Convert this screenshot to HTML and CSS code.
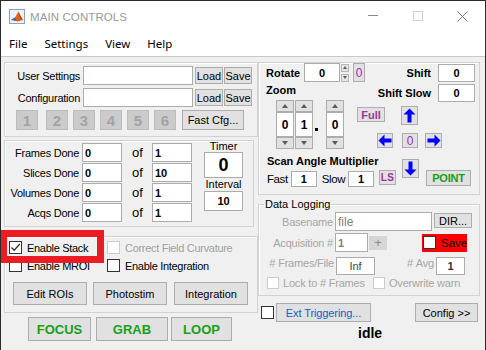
FILE: index.html
```html
<!DOCTYPE html>
<html>
<head>
<meta charset="utf-8">
<title>MAIN CONTROLS</title>
<link rel="stylesheet" href="styles.css">
</head>
<body>
<div class="window">
  <div class="titlebar">
    <svg class="appicon" width="16" height="15" viewBox="0 0 16 15">
      <rect x="0.5" y="0.5" width="15" height="14" fill="#eef2f7" stroke="#8ea3bb"/>
      <path d="M2 11 L6 8.5 L9.5 2.5 L11.5 7 L14 11 L9 12.5 Z" fill="#e2621b"/>
      <path d="M9.5 2.5 L11.5 7 L14 11 L11 9 Z" fill="#b8350f"/>
      <path d="M2 11 L6 8.5 L8 11.5 Z" fill="#2c6db3"/>
    </svg>
    <span class="title">MAIN CONTROLS</span>
    <div class="winbtns">
      <span class="wb"><svg width="10" height="10"><path d="M0 4.5H10" stroke="#8a8a8a"/></svg></span>
      <span class="wb"><svg width="10" height="10"><rect x="0.5" y="0.5" width="9" height="9" fill="none" stroke="#d2d2d2"/></svg></span>
      <span class="wb"><svg width="11" height="11"><path d="M0.5 0.5L10.5 10.5M10.5 0.5L0.5 10.5" stroke="#7a7a7a"/></svg></span>
    </div>
  </div>
  <div class="menubar">
    <span class="menu">File</span>
    <span class="menu">Settings</span>
    <span class="menu">View</span>
    <span class="menu">Help</span>
  </div>

  <div class="content">
    <div class="leftcol">
      <div class="panel settings">
        <div class="srow">
          <span class="slabel">User Settings</span>
          <span class="field wide"></span>
          <span class="btn sm">Load</span>
          <span class="btn sm save">Save</span>
        </div>
        <div class="srow">
          <span class="slabel">Configuration</span>
          <span class="field wide"></span>
          <span class="btn sm">Load</span>
          <span class="btn sm save">Save</span>
        </div>
        <div class="numrow">
          <span class="numbtn first">1</span>
          <span class="numbtn">2</span>
          <span class="numbtn">3</span>
          <span class="numbtn">4</span>
          <span class="numbtn">5</span>
          <span class="numbtn">6</span>
          <span class="btn fastcfg">Fast Cfg...</span>
        </div>
      </div>

      <div class="panel counters">
        <div class="crows">
          <div class="crow"><span class="clabel">Frames Done</span><span class="field cnt">0</span><span class="of">of</span><span class="field cnt">1</span></div>
          <div class="crow"><span class="clabel">Slices Done</span><span class="field cnt">0</span><span class="of">of</span><span class="field cnt">10</span></div>
          <div class="crow"><span class="clabel">Volumes Done</span><span class="field cnt">0</span><span class="of">of</span><span class="field cnt">1</span></div>
          <div class="crow"><span class="clabel">Acqs Done</span><span class="field cnt">0</span><span class="of">of</span><span class="field cnt">1</span></div>
        </div>
        <div class="timer">
          <span class="tlabel">Timer</span>
          <span class="field tbox">0</span>
          <span class="ilabel">Interval</span>
          <span class="field ibox">10</span>
        </div>
      </div>

      <div class="panel checks">
        <div class="chkrow">
          <span class="chkcell"><span class="cb"><svg width="11" height="11" viewBox="0 0 11 11"><path d="M1.5 5.5 L4.2 8.3 L9.8 2" fill="none" stroke="#333" stroke-width="1.3"/></svg></span>Enable Stack</span>
          <span class="chkcell dis"><span class="cb off"></span>Correct Field Curvature</span>
        </div>
        <div class="chkrow second">
          <span class="chkcell"><span class="cb"></span>Enable MROI</span>
          <span class="chkcell"><span class="cb"></span>Enable Integration</span>
        </div>
        <div class="brow">
          <span class="btn big">Edit ROIs</span>
          <span class="btn big b2">Photostim</span>
          <span class="btn big b3">Integration</span>
        </div>
      </div>

      <div class="runrow">
        <span class="btn run focus">FOCUS</span>
        <span class="btn run grab">GRAB</span>
        <span class="btn run loop">LOOP</span>
      </div>
    </div>

    <div class="rightcol">
      <div class="panel motion">
        <div class="mrow1">
          <span class="blabel rot">Rotate</span>
          <span class="field mval rotval">0</span>
          <span class="spin">
            <span class="spinhalf"><span class="tri up tiny"></span></span>
            <span class="spinhalf"><span class="tri down tiny"></span></span>
          </span>
          <span class="btn purple zero">0</span>
          <span class="blabel push">Shift</span>
          <span class="field mval shiftval">0</span>
        </div>
        <div class="mrow2">
          <span class="blabel rot">Zoom</span>
          <span class="blabel push">Shift Slow</span>
          <span class="field mval shiftval">0</span>
        </div>
        <div class="mbody">
          <div class="mleft">
            <div class="zrow">
              <div class="zcol">
                <span class="btn zbtn"><span class="tri up"></span></span>
                <span class="field zfield">0</span>
                <span class="btn zbtn"><span class="tri down"></span></span>
              </div>
              <div class="zcol c2">
                <span class="btn zbtn"><span class="tri up"></span></span>
                <span class="field zfield">1</span>
                <span class="btn zbtn"><span class="tri down"></span></span>
              </div>
              <span class="zdot"></span>
              <div class="zcol c3">
                <span class="btn zbtn"><span class="tri up"></span></span>
                <span class="field zfield">0</span>
                <span class="btn zbtn"><span class="tri down"></span></span>
              </div>
              <div class="fullcol">
                <span class="btn purple full">Full</span>
                <span class="btn arrow left">
                  <svg width="14" height="13" viewBox="0 0 14 13"><path d="M0.5 6.5 L6.5 0.5 L6.5 4.5 L13.5 4.5 L13.5 8.5 L6.5 8.5 L6.5 12.5 Z" fill="#0000ff"/></svg>
                </span>
              </div>
            </div>
            <span class="blabel scan">Scan Angle Multiplier</span>
            <div class="fastrow">
              <span class="nlabel fast">Fast</span>
              <span class="field sval">1</span>
              <span class="nlabel slow">Slow</span>
              <span class="field sval">1</span>
              <span class="btn purple ls">LS</span>
            </div>
          </div>
          <div class="pad">
            <span class="btn arrow upbtn">
              <svg width="13" height="15" viewBox="0 0 13 15"><path d="M6.5 0.5 L12.5 6.5 L8.5 6.5 L8.5 14.5 L4.5 14.5 L4.5 6.5 L0.5 6.5 Z" fill="#0000ff"/></svg>
            </span>
            <div class="padrow mid">
              <span class="btn purple center">0</span>
              <span class="btn arrow right">
                <svg width="14" height="13" viewBox="0 0 14 13"><path d="M13.5 6.5 L7.5 0.5 L7.5 4.5 L0.5 4.5 L0.5 8.5 L7.5 8.5 L7.5 12.5 Z" fill="#0000ff"/></svg>
              </span>
            </div>
            <div class="padrow bot">
              <span class="btn arrow downbtn">
                <svg width="13" height="15" viewBox="0 0 13 15"><path d="M6.5 14.5 L12.5 8.5 L8.5 8.5 L8.5 0.5 L4.5 0.5 L4.5 8.5 L0.5 8.5 Z" fill="#0000ff"/></svg>
              </span>
              <span class="btn point">POINT</span>
            </div>
          </div>
        </div>
      </div>

      <fieldset class="logging">
        <legend>Data Logging</legend>
        <div class="lrow r1">
          <span class="glabel">Basename</span>
          <span class="field gfield base">file</span>
          <span class="btn dir">DIR...</span>
        </div>
        <div class="lrow r2">
          <span class="glabel">Acquisition #</span>
          <span class="field gfield acq">1</span>
          <span class="plus">+</span>
          <span class="savebox"><span class="cb white"></span>Save</span>
        </div>
        <div class="lrow r3">
          <span class="glabel fl">#&nbsp;Frames/File</span>
          <span class="field inf">Inf</span>
          <span class="glabel avg">#&nbsp;Avg</span>
          <span class="field avgval">1</span>
        </div>
        <div class="lrow r4">
          <span class="lcell"><span class="cb off sm"></span>Lock to # Frames</span>
          <span class="lcell"><span class="cb off sm"></span>Overwrite warn</span>
        </div>
      </fieldset>

      <div class="extrow">
        <span class="cb ext"></span>
        <span class="btn extbtn">Ext Triggering...</span>
        <span class="btn config">Config &gt;&gt;</span>
      </div>
      <div class="idle">idle</div>
    </div>
  </div>

  <div class="highlight"></div>
</div>
</body>
</html>
```

FILE: styles.css
```css
* { box-sizing: border-box; }

body {
  margin: 0;
  background: #f0f0f0;
}

.window {
  position: relative;
  width: 486px;
  height: 350px;
  border: 1px solid #2b2b2b;
  border-bottom: none;
  background: #f0f0f0;
  overflow: hidden;
  font-family: "Liberation Sans", Arial, sans-serif;
  font-size: 11px;
  color: #000;
}

/* title bar */
.titlebar {
  height: 30px;
  background: #fff;
  display: flex;
  align-items: center;
}
.appicon { margin-left: 8px; margin-top: 1px; }
.title {
  margin-left: 5px;
  color: #9a9a9a;
  font-family: "Liberation Sans", Arial, sans-serif;
  font-size: 11.5px;
  letter-spacing: 0.1px;
  margin-top: 1px;
}
.winbtns { margin-left: auto; display: flex; height: 30px; }
.wb {
  width: 45px;
  height: 30px;
  display: flex;
  align-items: center;
  justify-content: center;
}

/* menu */
.menubar {
  height: 26px;
  background: #fff;
  border-bottom: 1px solid #c9c9c9;
  display: flex;
  align-items: center;
  padding-left: 8px;
  font-family: "Noto Sans", "Open Sans", sans-serif;
  font-size: 11.5px;
}
.menu { margin-right: 17px; padding-bottom: 1px; }

/* content */
.content {
  display: flex;
  padding: 5px 0 0 3px;
}
.leftcol { width: 254px; display: flex; flex-direction: column; }
.rightcol { width: 222px; display: flex; flex-direction: column; }

.panel {
  border: 1px solid #d2d2d2;
  box-shadow: inset 1px 1px 0 #fff;
}

.field {
  display: flex;
  align-items: center;
  background: #fff;
  border: 1px solid #acacac;
}
.btn {
  display: flex;
  align-items: center;
  justify-content: center;
  background: #e1e1e1;
  border: 1px solid #adadad;
  white-space: nowrap;
}

/* settings */
.settings { height: 75px; padding-top: 3px; }
.srow { display: flex; align-items: center; height: 19px; margin-bottom: 3px; }
.slabel {
  width: 75px;
  text-align: right;
  margin-right: 3px;
  letter-spacing: -0.25px;
}
.field.wide { width: 110px; height: 19px; }
.btn.sm { width: 28px; height: 17px; margin-left: 2px; }
.btn.sm.save { margin-left: 1px; }
.numrow { display: flex; align-items: center; height: 20px; padding-left: 11px; }
.numbtn {
  width: 22px;
  height: 20px;
  margin-left: 5px;
  display: flex;
  align-items: center;
  justify-content: center;
  background: #cbcbcb;
  border: 1px solid #bdbdbd;
  color: #a3a3a3;
  font-weight: bold;
  font-size: 15px;
}
.numbtn.first { margin-left: 0; margin-right: 3px; }
.btn.fastcfg { width: 62px; height: 20px; margin-left: 6px; }

/* counters */
.counters {
  width: 250px;
  height: 87px;
  margin-top: 3px;
  padding-top: 2px;
  display: flex;
}
.crows { display: flex; flex-direction: column; gap: 1px; }
.crow { display: flex; align-items: center; height: 19px; }
.clabel { width: 74px; text-align: right; margin-right: 3px; letter-spacing: -0.25px; }
.field.cnt { width: 40px; height: 19px; font-weight: bold; padding-left: 2px; }
.of { width: 30px; text-align: center; font-size: 13px; padding-left: 1px; }
.timer {
  margin-left: 12px;
  margin-top: -2px;
  width: 39px;
  display: flex;
  flex-direction: column;
  align-items: center;
}
.tlabel { line-height: 11px; height: 11px; }
.field.tbox {
  width: 39px;
  height: 26px;
  justify-content: center;
  font-weight: bold;
  font-size: 18px;
}
.ilabel { line-height: 13px; height: 13px; }
.field.ibox { width: 39px; height: 20px; justify-content: center; font-weight: bold; }

/* checks */
.checks { height: 77px; margin-top: 9px; padding: 4px 0 0 4px; }
.chkrow { display: flex; align-items: center; height: 13px; }
.chkrow.second { margin-top: 5px; }
.chkcell { width: 98px; display: flex; align-items: center; letter-spacing: -0.3px; white-space: nowrap; }
.chkcell.dis { color: #a0a0a0; }
.cb {
  width: 13px;
  height: 13px;
  flex: none;
  border: 1px solid #333;
  background: #fff;
  margin-right: 5px;
  display: flex;
  align-items: center;
  justify-content: center;
}
.cb.off { border-color: #cccccc; }
.brow { display: flex; margin-top: 10px; padding-left: 4px; }
.btn.big { width: 74px; height: 23px; }
.btn.b2 { margin-left: 6px; }
.btn.b3 { margin-left: 7px; }

.runrow { display: flex; margin-top: 4px; padding-left: 24px; }
.btn.run {
  height: 24px;
  color: #17a017;
  font-weight: bold;
  font-size: 13px;
}
.btn.focus { width: 63px; }
.btn.grab { width: 72px; margin-left: 5px; }
.btn.loop { width: 61px; margin-left: 3px; }

/* motion */
.motion { height: 133px; display: flex; flex-direction: column; }
.blabel { font-weight: bold; font-size: 11px; white-space: nowrap; }
.mrow1 { display: flex; align-items: center; height: 19px; padding-right: 4px; }
.mrow2 { display: flex; align-items: flex-start; height: 18px; margin-top: 2px; padding-right: 4px; }
.mrow2 .blabel { line-height: 13px; }
.mrow2 .blabel.push { align-self: center; }
.blabel.rot { margin-left: 7px; width: 38px; }
.blabel.push { margin-left: auto; margin-right: 7px; }
.field.mval { justify-content: center; font-weight: bold; font-size: 11px; }
.field.rotval { width: 36px; height: 19px; }
.field.shiftval { width: 37px; height: 18px; }
.spin {
  margin-left: 1px;
  width: 8px;
  height: 18px;
  display: flex;
  flex-direction: column;
  justify-content: space-between;
}
.spinhalf {
  height: 8px;
  background: #e6e6e6;
  border: 1px solid #b8b8b8;
  display: flex;
  align-items: center;
  justify-content: center;
}
.btn.zero { margin-left: 4px; width: 12px; height: 19px; font-size: 12px; }
.purple { color: #a2309e; }

.tri { width: 0; height: 0; border-left: 3.5px solid transparent; border-right: 3.5px solid transparent; }
.tri.up { border-bottom: 4px solid #5a5a5a; }
.tri.down { border-top: 4px solid #5a5a5a; }
.tri.tiny { border-left-width: 2px; border-right-width: 2px; border-bottom-width: 3px; border-top-width: 3px; }

.mbody { display: flex; margin-top: -2px; }
.mleft { width: 138px; display: flex; flex-direction: column; }
.zrow { display: flex; align-items: flex-start; padding-left: 17px; }
.zcol { width: 18px; display: flex; flex-direction: column; }
.zcol.c2 { margin-left: 1px; }
.zcol.c3 { margin-left: 8px; }
.btn.zbtn { height: 12px; }
.field.zfield { height: 25px; justify-content: center; font-weight: bold; font-size: 12px; }
.zdot { width: 3px; height: 3px; background: #000; margin: 28px 0 0 2px; }
.fullcol { display: flex; flex-direction: column; align-items: flex-start; margin-left: 13px; }
.btn.full { width: 28px; height: 15px; margin-top: 7px; font-weight: bold; font-size: 11px; }
.btn.arrow.left { width: 16px; height: 15px; margin: 11px 0 0 20px; }
.blabel.scan { margin: 6px 0 0 8px; line-height: 13px; }
.fastrow { display: flex; align-items: center; height: 18px; margin-top: 2px; }
.nlabel { font-size: 11.5px; letter-spacing: -0.4px; }
.nlabel.fast { margin-left: 8px; }
.nlabel.slow { margin-left: 5px; }
.field.sval { width: 26px; height: 16px; margin-left: 3px; justify-content: center; font-weight: bold; }
.btn.ls { width: 17px; height: 15px; margin-left: 5px; align-self: flex-start; font-weight: bold; font-size: 10px; letter-spacing: 0.5px; }

.pad { display: flex; flex-direction: column; }
.btn.arrow { padding: 0; }
.btn.upbtn { width: 17px; height: 19px; margin: 6px 0 0 4px; }
.padrow { display: flex; align-items: flex-start; }
.padrow.mid { margin-top: 8px; }
.padrow.bot { margin-top: 11px; }
.btn.center { width: 16px; height: 15px; margin-left: 5px; font-size: 12px; }
.btn.arrow.right { width: 17px; height: 15px; margin-left: 7px; }
.btn.downbtn { width: 17px; height: 19px; margin-left: 5px; }
.btn.point {
  width: 45px;
  height: 16px;
  margin: 11px 0 0 7px;
  color: #17a017;
  font-weight: bold;
  font-size: 11px;
  letter-spacing: -0.2px;
}

/* data logging */
.logging {
  margin: 3px 0 0 0;
  padding: 0 0 6px 0;
  min-width: 0;
  border: 1px solid #d2d2d2;
  box-shadow: inset 1px 1px 0 #fff;
}
.logging legend {
  margin-left: 5px;
  padding: 0 1px;
  line-height: 13px;
  font-size: 11px;
}
.lrow { display: flex; align-items: center; }
.lrow.r1 { height: 19px; margin-top: 1px; }
.lrow.r2 { height: 19px; margin-top: 2px; }
.lrow.r3 { height: 18px; margin-top: 5px; align-items: flex-start; }
.lrow.r4 { height: 12px; margin-top: 2px; }
.glabel { width: 74px; text-align: right; color: #a6a6a6; letter-spacing: -0.2px; white-space: nowrap; }
.lrow.r3 .glabel { line-height: 13px; }
.glabel.fl { width: 75px; }
.glabel.avg { width: 59px; }
.field.gfield { height: 19px; margin-left: 2px; color: #808080; font-weight: bold; padding-left: 2px; }
.field.base { width: 97px; font-weight: normal; font-size: 12px; }
.field.acq { width: 33px; }
.btn.dir { width: 38px; height: 15px; margin-left: 2px; align-self: flex-start; margin-top: 1px; }
.plus {
  width: 18px;
  height: 14px;
  margin-left: 1px;
  background: #d6d6d6;
  color: #8a8a8a;
  font-size: 13px;
  display: flex;
  align-items: center;
  justify-content: center;
}
.savebox {
  width: 45px;
  height: 18px;
  margin-left: 35px;
  background: #ff0000;
  display: flex;
  align-items: center;
  padding-left: 1px;
  font-size: 11.5px;
}
.cb.white { border-color: #333; margin-right: 5px; }
.field.inf { width: 39px; height: 18px; margin-left: 2px; justify-content: center; color: #444; }
.field.avgval { width: 29px; height: 18px; margin-left: 2px; justify-content: center; font-weight: bold; color: #333; }
.lcell { width: 111px; display: flex; align-items: center; color: #a6a6a6; letter-spacing: -0.2px; white-space: nowrap; }
.lcell:first-child { margin-left: 8px; }
.cb.sm { width: 12px; height: 12px; margin-right: 4px; }

.extrow { display: flex; align-items: center; height: 19px; margin-top: 7px; padding-right: 2px; }
.cb.ext { margin-left: 3px; margin-right: 0; }
.btn.extbtn { width: 95px; height: 19px; margin-left: 2px; color: #0a64c8; letter-spacing: -0.1px; }
.btn.config { width: 63px; height: 19px; margin-left: auto; }
.idle {
  margin-top: 3px;
  line-height: 16px;
  padding-left: 100px;
  font-weight: bold;
  font-size: 14px;
}

/* annotation overlay */
.highlight {
  position: absolute;
  left: -1px;
  top: 229px;
  width: 104px;
  height: 33px;
  border: 7px solid #ec1c24;
}
```
